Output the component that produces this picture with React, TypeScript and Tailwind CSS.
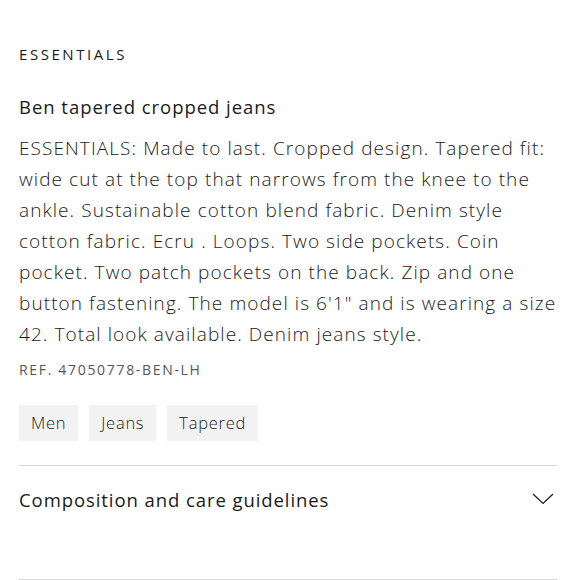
import React from "react";

const lines = [
  "ESSENTIALS: Made to last. Cropped design. Tapered fit:",
  "wide cut at the top that narrows from the knee to the",
  "ankle. Sustainable cotton blend fabric. Denim style",
  "cotton fabric. Ecru . Loops. Two side pockets. Coin",
  "pocket. Two patch pockets on the back. Zip and one",
  "button fastening. The model is 6'1\" and is wearing a size",
  "42. Total look available. Denim jeans style.",
];

export default function App() {
  return (
    <div
      className="w-[580px] h-[580px] overflow-hidden bg-white pl-[19px] pr-[23px] text-[#1a1a1a]"
      style={{ fontFamily: "'Open Sans', 'Noto Sans', sans-serif" }}
    >
      <div className="pt-[44px] text-[15px] leading-[20px] tracking-[0.17em]">ESSENTIALS</div>
      <div className="mt-[31px] text-[18.5px] leading-[24px] tracking-[0.052em]">Ben tapered cropped jeans</div>
      <div className="mt-[14px] text-[19px] leading-[31px] tracking-[0.057em] font-light">
        {lines.map((l) => (
          <div key={l} className="whitespace-nowrap">{l}</div>
        ))}
      </div>
      <div className="mt-[11px] text-[14px] leading-[18px] tracking-[0.12em] text-[#555]">REF. 47050778-BEN-LH</div>
      <div className="mt-[26px] flex gap-[11px]">
        {["Men", "Jeans", "Tapered"].map((t) => (
          <div key={t} className="h-[36px] px-[12px] bg-[#f2f2f2] flex items-center text-[16.5px] tracking-[0.045em] font-light">
            {t}
          </div>
        ))}
      </div>
      <div className="mt-[24px] border-t border-[#d9d9d9]" />
      <div className="h-[113px] flex items-start justify-between pt-[22px]">
        <div className="text-[18.5px] leading-[24px] tracking-[0.05em]">Composition and care guidelines</div>
        <svg width="22" height="12" viewBox="0 0 22 12" className="mt-[5px] mr-[3px]">
          <path d="M1 1 L11 10.5 L21 1" fill="none" stroke="#1a1a1a" strokeWidth="1.2" />
        </svg>
      </div>
      <div className="border-t border-[#d9d9d9]" />
    </div>
  );
}
